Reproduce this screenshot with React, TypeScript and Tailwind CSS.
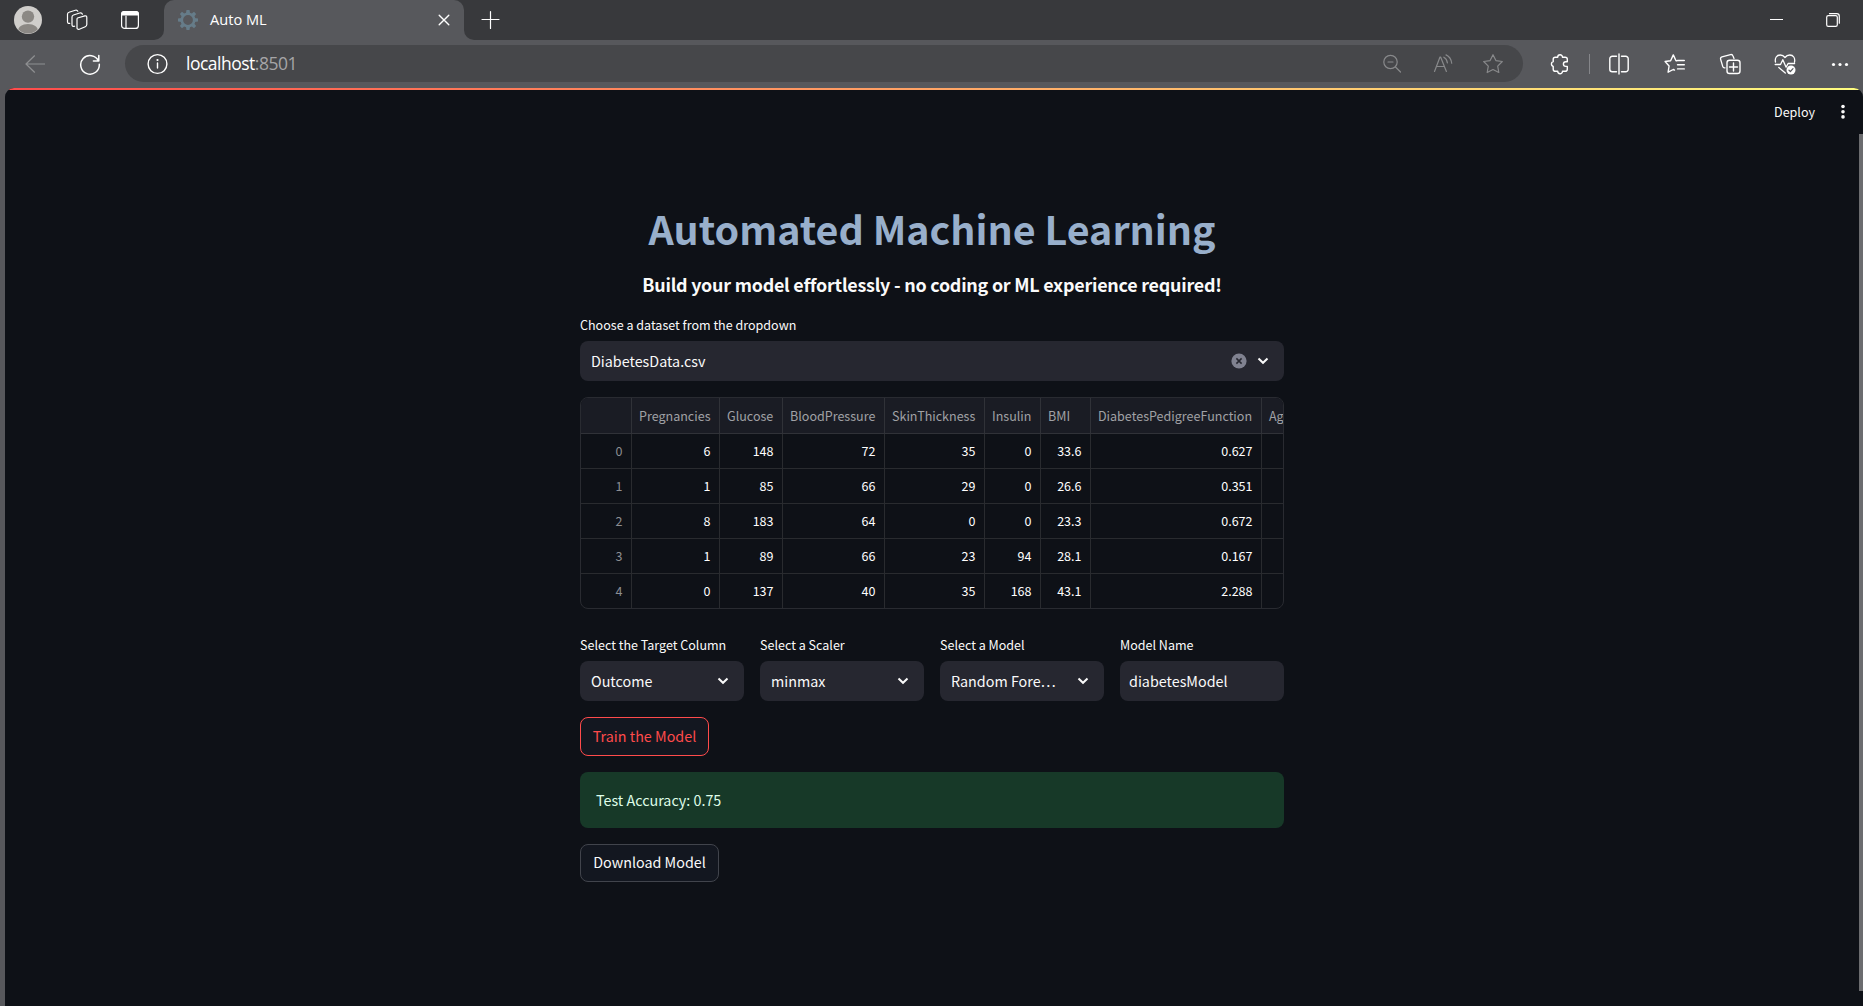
import type { ReactNode } from "react";

function Icon({ size = 20, className = "", children }: { size?: number; className?: string; children: ReactNode }) {
  return (
    <svg
      width={size}
      height={size}
      viewBox={`0 0 ${size} ${size}`}
      fill="none"
      stroke="currentColor"
      strokeWidth={1.2}
      strokeLinecap="round"
      strokeLinejoin="round"
      className={`block shrink-0 ${className}`}
    >
      {children}
    </svg>
  );
}

function Avatar() {
  return (
    <svg width="28" height="28" viewBox="0 0 28 28" className="block shrink-0">
      <defs>
        <clipPath id="face">
          <circle cx="14" cy="14" r="13.6" />
        </clipPath>
      </defs>
      <circle cx="14" cy="14" r="14" fill="#d0cecb" />
      <g clipPath="url(#face)" fill="#8b8884">
        <circle cx="14" cy="10.6" r="6.2" />
        <path d="M4 28v-3c0-4 4-7 10-7s10 3 10 7v3z" />
      </g>
    </svg>
  );
}

function Gear() {
  const teeth = [0, 45, 90, 135, 180, 225, 270, 315];
  return (
    <svg width="20" height="20" viewBox="0 0 20 20" className="block shrink-0">
      <circle cx="10" cy="10" r="6.2" fill="none" stroke="#667c89" strokeWidth="2.6" />
      {teeth.map((a) => (
        <path key={a} d="M7.900 3.800L8.500 0h3l.6 3.800z" fill="#667c89" transform={`rotate(${a} 10 10)`} />
      ))}
    </svg>
  );
}

function TabStrip() {
  return (
    <div className="flex h-10 bg-[#57585c] text-white">
      <div className="flex w-41 items-center rounded-br-[10px] bg-[#38393c] pl-3.5">
        <Avatar />
        <Icon size={22} className="ml-[24px]">
          <path d="M11.500 9l7.300-2.100c1.200-.3 2 .3 2 1.500v7.200c0 1-.5 1.700-1.500 2.100l-6 2.500c-1.300.5-2.300-.2-2.300-1.500v-8c0-.9-.1-1.400.5-1.700z" />
          <path d="M8.600 17.200c-1.600.5-2.600-.1-2.600-1.400V8c0-1 .5-1.700 1.500-2l6.200-2c1.300-.4 2.300 0 2.700 1.200" />
          <path d="M3.800 14.300c-1.500.3-2.300-.2-2.300-1.500V5.300c0-1 .5-1.700 1.500-2L9.300 1.200c1.200-.4 2-.1 2.500 1" />
        </Icon>
        <Icon size={20} className="ml-[32px]">
          <rect x="1.600" y="1.600" width="16.800" height="16.800" rx="3" />
          <path d="M1.600 5V4a2.400 2.400 0 0 1 2.400-2.400h12A2.400 2.400 0 0 1 18.400 4v1z" fill="currentColor" />
          <path d="M6 6v12" />
        </Icon>
      </div>
      <div className="flex w-[300px] bg-[#38393c]">
        <div className="flex w-full items-center rounded-t-[10px] bg-[#57585c] pl-3.5">
          <Gear />
          <span className="ml-3 -mt-0.5 text-[14.600px] leading-5">Auto ML</span>
          <Icon size={12} className="ml-auto mr-[14px]">
            <path d="M1.200 1.200l9.600 9.600M10.800 1.200l-9.600 9.600" strokeWidth="1.400" />
          </Icon>
        </div>
      </div>
      <div className="flex flex-1 items-center rounded-bl-[10px] bg-[#38393c] pl-4">
        <Icon size={20}>
          <path d="M10.500 1.500v17M2 9.500h17" strokeWidth="1.200" />
        </Icon>
        <div className="ml-auto flex items-center gap-[43px] pr-[23px]">
          <span className="-mt-px h-px w-[13px] bg-white" />
          <Icon size={14}>
            <rect x=".7" y="2.700" width="10.600" height="10.600" rx="1.600" />
            <path d="M3.500.7h7.300c1.400 0 2.500 1.100 2.500 2.500v7" />
          </Icon>
        </div>
      </div>
    </div>
  );
}

function Toolbar() {
  return (
    <div className="flex h-12 items-center bg-[#57585c] pb-px text-white">
      <Icon size={20} className="ml-[25px] text-[#8e8f91]">
        <path d="M9.500 1.800L1 10l8.500 8.200M1 10h18.500" />
      </Icon>
      <Icon size={22} className="ml-[34px]">
        <path d="M19.500 8A9.300 9.300 0 1 0 20.300 11.200M19.800 2.500v5.400h-5.400" strokeWidth="1.500" />
      </Icon>
      <div className="ml-[24px] flex h-[37px] w-[1398px] items-center rounded-full bg-[#46474a] pl-[21px] pr-[19px]">
        <Icon size={22}>
          <circle cx="11.500" cy="11" r="9.400" strokeWidth="1.400" />
          <path d="M11.500 10v5" strokeWidth="1.400" />
          <circle cx="11.500" cy="7" r=".5" fill="currentColor" />
        </Icon>
        <span className="ml-[18px] -mt-px text-[17.500px] leading-6 tracking-[-0.5px]">
          localhost<span className="text-[#a5a5a7]">:8501</span>
        </span>
        <div className="ml-auto flex items-center gap-[29px] text-[#88898b]">
          <Icon size={20} className="mr-0.5">
            <circle cx="8.500" cy="8" r="6.700" />
            <path d="M13.500 13l5 5M6 8h5" />
          </Icon>
          <Icon size={20}>
            <path d="M1.500 17.500L7 3h.6l5.800 14.500M3.500 12.500h7.800M10.800 3.200c1.800.9 3.200 2.800 3.600 5.600M13 .9c3 1.300 5.200 4.300 5.700 8.300" />
          </Icon>
          <Icon size={22}>
            <path d="M11 1.700l2.900 5.900 6.400.9-4.600 4.600 1.100 6.400-5.800-3-5.800 3 1.100-6.400-4.600-4.600 6.400-.9z" />
          </Icon>
        </div>
      </div>
      <Icon size={22} className="ml-[26px]">
        <path
          d="M6.300 4.200h2.400a2.400 2.400 0 0 1 4.800 0h2.600c1.200 0 2.200.9 2.200 2.100v2.500h-1.600a2.300 2.300 0 0 0 0 4.600h1.600v2.800c0 1.200-1 2.100-2.200 2.100h-2.600a2.400 2.400 0 0 1-4.800 0H6.300c-1.200 0-2.100-.9-2.100-2.100v-2.700a2.500 2.500 0 0 1 0-4.800V6.300c0-1.200.9-2.100 2.100-2.100z"
          strokeWidth="1.400"
        />
      </Icon>
      <span className="ml-[18px] h-5 w-px bg-[#85868a]" />
      <Icon size={22} className="ml-[18px]">
        <path
          d="M8.500 3.200H4.300a2.500 2.500 0 0 0-2.500 2.500v10.600a2.500 2.500 0 0 0 2.500 2.500h4.200M13.500 3.200h4.200a2.500 2.500 0 0 1 2.500 2.500v10.600a2.500 2.500 0 0 1-2.500 2.500h-4.200M11 1v20"
          strokeWidth="1.400"
        />
      </Icon>
      <Icon size={22} className="ml-[34px]">
        <path
          d="M13 7.700h-1L9.300 1.900 6.600 7.700l-5.500.8 4 4.500-1 6.200 5.200-2.700 1.200.6M13.500 7.500h6.800M13.500 11.700h6.800M13.500 15.900h6.800"
          strokeWidth="1.400"
        />
      </Icon>
      <Icon size={22} className="ml-[33px]">
        <path
          d="M15 5.500l-1-2.500c-.4-1.200-1.300-1.700-2.500-1.400L3 3.900c-1.200.4-1.700 1.200-1.400 2.400l2.200 7.300c.3 1 1 1.400 2.200 1.200"
          strokeWidth="1.300"
        />
        <rect x="8" y="7.200" width="13" height="13.300" rx="2.600" strokeWidth="1.400" />
        <path d="M14.500 10v8M10.500 14h8" strokeWidth="1.400" />
      </Icon>
      <Icon size={22} className="ml-[33px]">
        <path
          d="M1.500 9c-.9-4 1.200-7 4.700-7 2 0 3.600.9 4.800 2.500C12.200 2.900 13.800 2 15.800 2c3.500 0 5.600 3 4.700 7M1.200 11.500h5.300l2.300-4.800 3.300 7.500 2-3.700h6.500M4.800 14.500l6.500 5.500"
          strokeWidth="1.300"
        />
        <circle cx="17" cy="17" r="4.500" fill="currentColor" stroke="none" />
        <path d="M15 17.200l1.400 1.300 2.600-2.800" stroke="#57585c" />
      </Icon>
      <Icon size={18} className="ml-[35px]">
        <g fill="currentColor" stroke="none">
          <circle cx="2.500" cy="9.500" r="1.600" />
          <circle cx="9" cy="9.500" r="1.600" />
          <circle cx="15.500" cy="9.500" r="1.600" />
        </g>
      </Icon>
    </div>
  );
}

function Chevron() {
  return (
    <svg width="12" height="8" viewBox="0 0 12 8" fill="none" stroke="#fafafa" strokeWidth="2" className="block shrink-0">
      <path d="M1.500 1.500L6 5.800l4.500-4.300" />
    </svg>
  );
}

function Field({ label, children }: { label: string; children: ReactNode }) {
  return (
    <div className="flex w-41 flex-col">
      <span className="mb-1.5 whitespace-nowrap text-[12.540px] leading-[21px]">{label}</span>
      <div className="flex h-10 items-center rounded-lg bg-[#262730] text-[14.330px] leading-6">{children}</div>
    </div>
  );
}

function Select({ label, value }: { label: string; value: string }) {
  return (
    <Field label={label}>
      <span className="flex-1 whitespace-nowrap pl-[11px]">{value}</span>
      <span className="mr-[15px]">
        <Chevron />
      </span>
    </Field>
  );
}

const headers = ["", "Pregnancies", "Glucose", "BloodPressure", "SkinThickness", "Insulin", "BMI", "DiabetesPedigreeFunction", "Ag"];
const rows = [
  ["0", "6", "148", "72", "35", "0", "33.6", "0.627", ""],
  ["1", "1", "85", "66", "29", "0", "26.6", "0.351", ""],
  ["2", "8", "183", "64", "0", "0", "23.3", "0.672", ""],
  ["3", "1", "89", "66", "23", "94", "28.1", "0.167", ""],
  ["4", "0", "137", "40", "35", "168", "43.1", "2.288", ""],
];
const columns = "grid grid-cols-[51px_88px_63px_102px_100px_56px_50px_171px_60px]";

function DataTable() {
  return (
    <div className="h-[212px] overflow-hidden rounded-lg border border-[#292b31] text-[12.540px] leading-5">
      <div className={`${columns} h-9 border-b border-[#303238] bg-[#1a1c24] text-[#a0a1a5]`}>
        {headers.map((h, i) => (
          <div key={i} className="flex items-center overflow-hidden border-r border-[#303238] pl-[7px] pt-px whitespace-nowrap">
            {h}
          </div>
        ))}
      </div>
      {rows.map((row) => (
        <div key={row[0]} className={`${columns} h-[35px] border-b border-[#292b2f] pb-px`}>
          {row.map((cell, i) => (
            <div
              key={i}
              className={`-mb-px flex items-center justify-end border-r border-[#292b2f] pb-px pr-[8.500px] ${i === 0 ? "text-[#8c8e92]" : "text-white"}`}
            >
              {cell}
            </div>
          ))}
        </div>
      ))}
    </div>
  );
}

function StreamlitPage() {
  return (
    <div className="flex h-[918px] bg-[#57585c]">
      <div className="ml-[5px] flex flex-1 flex-col overflow-hidden rounded-t-[9px] bg-[#0e1117] font-['Noto_Sans_CJK_SC','Noto_Sans',sans-serif] text-[#fafafa]">
        <div className="h-0.5 shrink-0 bg-linear-to-r/srgb from-[#ff4b4b] to-[#fffd80]" />
        <div className="flex flex-1">
          <div className="flex flex-1 flex-col">
            <div className="flex h-11 items-center justify-end">
              <span className="text-[12.540px] leading-5">Deploy</span>
              <svg width="4" height="16" viewBox="0 0 4 16" fill="currentColor" className="ml-[26px] mr-[14px] block">
                <circle cx="2" cy="2.500" r="1.800" />
                <circle cx="2" cy="7.700" r="1.800" />
                <circle cx="2" cy="12.900" r="1.800" />
              </svg>
            </div>
            <div className="ml-[575px] flex w-[704px] flex-col pt-[67px]">
              <h1 className="text-center text-[39.400px] font-bold leading-[53px] whitespace-nowrap text-[#98afcb]">
                Automated Machine Learning
              </h1>
              <h3 className="mt-[18px] text-center text-[17.900px] font-bold leading-6 tracking-[-0.23px] whitespace-nowrap">
                Build your model effortlessly - no coding or ML experience required!
              </h3>
              <span className="mt-[18px] text-[12.540px] leading-[21px]">Choose a dataset from the dropdown</span>
              <div className="mt-1.5 mb-4 flex h-10 items-center rounded-lg bg-[#262730] pl-[11px] pr-[15px] text-[14.330px] leading-6">
                <span className="flex-1">DiabetesData.csv</span>
                <svg width="16" height="16" viewBox="0 0 16 16" className="mr-[10px] block">
                  <circle cx="8" cy="8" r="7.600" fill="#808290" />
                  <path d="M5.400 5.400l5.200 5.200M10.600 5.400l-5.200 5.200" stroke="#262730" strokeWidth="1.500" />
                </svg>
                <Chevron />
              </div>
              <DataTable />
              <div className="mt-[25px] flex gap-4">
                <Select label="Select the Target Column" value="Outcome" />
                <Select label="Select a Scaler" value="minmax" />
                <Select label="Select a Model" value="Random Fore…" />
                <Field label="Model Name">
                  <span className="pl-[9px]">diabetesModel</span>
                </Field>
              </div>
              <button className="mt-4 h-[39px] w-[129px] rounded-lg border border-[#ff4b4b] bg-[#131720] pb-0.5 text-[14.330px] leading-6 whitespace-nowrap text-[#ff4b4b]">
                Train the Model
              </button>
              <div className="mt-4 flex h-14 items-center rounded-lg bg-[#173928] pl-4 text-[14.330px] leading-6 text-[#dffde9]">
                Test Accuracy: 0.75
              </div>
              <button className="mt-4 h-[38px] w-[139px] rounded-lg border border-[#41444c] bg-[#131720] pb-0.5 text-[14.330px] leading-6 whitespace-nowrap">
                Download Model
              </button>
            </div>
          </div>
          <div className="mt-11 h-[857px] w-1 bg-[#6b6c6f]" />
        </div>
      </div>
    </div>
  );
}

export default function App() {
  return (
    <div className="h-[1006px] w-[1863px] overflow-hidden bg-[#57585c] font-['Open_Sans','Noto_Sans',sans-serif]">
      <TabStrip />
      <Toolbar />
      <StreamlitPage />
    </div>
  );
}
